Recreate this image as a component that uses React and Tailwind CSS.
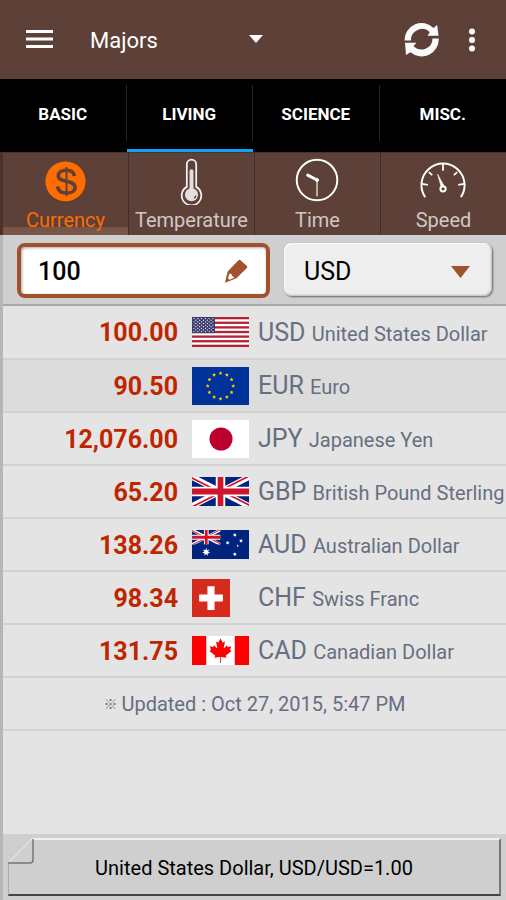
import { useState } from 'react';

const categories = ['BASIC', 'LIVING', 'SCIENCE', 'MISC.'];

const rates = [
    {code: 'USD', name: 'United States Dollar', value: '100.00', Flag: FlagUS},
    {code: 'EUR', name: 'Euro', value: '90.50', Flag: FlagEU},
    {code: 'JPY', name: 'Japanese Yen', value: '12,076.00', Flag: FlagJP},
    {code: 'GBP', name: 'British Pound Sterling', value: '65.20', Flag: FlagGB},
    {code: 'AUD', name: 'Australian Dollar', value: '138.26', Flag: FlagAU},
    {code: 'CHF', name: 'Swiss Franc', value: '98.34', Flag: FlagCH},
    {code: 'CAD', name: 'Canadian Dollar', value: '131.75', Flag: FlagCA},
];

const tools = [
    {label: 'Currency', Icon: CurrencyIcon},
    {label: 'Temperature', Icon: ThermometerIcon},
    {label: 'Time', Icon: ClockIcon},
    {label: 'Speed', Icon: GaugeIcon},
];

/* flags */

function FlagUS() {
    return (
        <svg viewBox="0 0 57 30" className="w-[57px] h-[30px]">
            <rect width="57" height="30" fill="#fff" />
            {[0, 1, 2, 3, 4, 5, 6].map((i) => (
                <rect key={i} y={i * 4.615} width="57" height="2.308" fill="#b22234" />
            ))}
            <rect width="23" height="16.15" fill="#3c3b6e" />
            {[0, 1, 2, 3, 4, 5, 6, 7, 8].map((row) =>
                Array.from({length: row % 2 ? 5 : 6}, (_, col) => (
                    <circle key={`${row}-${col}`} cx={2 + col * 3.8 + (row % 2 ? 1.9 : 0)} cy={1.6 + row * 1.62} r="0.62" fill="#fff" />
                ))
            )}
        </svg>
    );
}

function starPoints(cx, cy, r, tips, inner) {
    return Array.from({length: tips * 2}, (_, i) => {
        const radius = i % 2 ? r * inner : r;
        const angle = (Math.PI * i) / tips - Math.PI / 2;
        return `${cx + radius * Math.cos(angle)},${cy + radius * Math.sin(angle)}`;
    }).join(' ');
}

function FlagEU() {
    return (
        <svg viewBox="0 0 57 38" className="w-[57px] h-[38px]">
            <rect width="57" height="38" fill="#039" />
            {Array.from({length: 12}, (_, i) => {
                const angle = (Math.PI * i) / 6;
                return <polygon key={i} points={starPoints(28.5 + 12.8 * Math.sin(angle), 19 - 12.8 * Math.cos(angle), 2, 5, 0.5)} fill="#fc0" />;
            })}
        </svg>
    );
}

function FlagJP() {
    return (
        <svg viewBox="0 0 57 38" className="w-[57px] h-[38px]">
            <rect width="57" height="38" fill="#fff" />
            <circle cx="29" cy="19" r="11.5" fill="#bc002d" />
        </svg>
    );
}

function UnionJack() {
    return (
        <>
            <rect width="60" height="30" fill="#00247d" />
            <path d="M0 0L60 30M60 0L0 30" stroke="#fff" strokeWidth="6" />
            <path d="M0 0L30 15H26L0 2ZM60 0L30 15H26L56 0ZM60 30L30 15H34L60 28ZM0 30L30 15H34L4 30Z" fill="#cf142b" />
            <path d="M30 0V30M0 15H60" stroke="#fff" strokeWidth="10" />
            <path d="M30 0V30M0 15H60" stroke="#cf142b" strokeWidth="6" />
        </>
    );
}

function FlagGB() {
    return (
        <svg viewBox="0 0 60 30" preserveAspectRatio="none" className="w-[57px] h-[29px]">
            <UnionJack />
        </svg>
    );
}

function FlagAU() {
    return (
        <svg viewBox="0 0 57 29" className="w-[57px] h-[29px]">
            <rect width="57" height="29" fill="#00247d" />
            <svg viewBox="0 0 60 30" width="28.5" height="14.5" preserveAspectRatio="none">
                <UnionJack />
            </svg>
            <polygon points={starPoints(14.2, 22, 4.2, 7, 0.45)} fill="#fff" />
            <polygon points={starPoints(42.8, 5, 2, 7, 0.5)} fill="#fff" />
            <polygon points={starPoints(35.6, 12.8, 2, 7, 0.5)} fill="#fff" />
            <polygon points={starPoints(49, 10.8, 2, 7, 0.5)} fill="#fff" />
            <polygon points={starPoints(42.8, 24.2, 2, 7, 0.5)} fill="#fff" />
            <polygon points={starPoints(45.7, 15.8, 1.2, 5, 0.5)} fill="#fff" />
        </svg>
    );
}

function FlagCH() {
    return (
        <svg viewBox="0 0 32 32" className="w-[38px] h-[38px]">
            <rect width="32" height="32" fill="#d52b1e" />
            <path d="M13 6h6v7h7v6h-7v7h-6v-7H6v-6h7z" fill="#fff" />
        </svg>
    );
}

function FlagCA() {
    return (
        <svg viewBox="0 0 9600 4800" className="w-[57px] h-[29px]" preserveAspectRatio="none">
            <rect width="9600" height="4800" fill="#f00" />
            <rect x="2400" width="4800" height="4800" fill="#fff" />
            <path d="M4890 4430l-45-863a95 95 0 0 1 111-98l859 151-116-320a65 65 0 0 1 20-73l941-762-212-99a65 65 0 0 1-34-79l186-572-542 115a65 65 0 0 1-73-38l-105-247-423 454a65 65 0 0 1-111-57l204-1052-327 189a65 65 0 0 1-91-27l-332-652-332 652a65 65 0 0 1-91 27l-327-189 204 1052a65 65 0 0 1-111 57l-423-454-105 247a65 65 0 0 1-73 38l-542-115 186 572a65 65 0 0 1-34 79l-212 99 941 762a65 65 0 0 1 20 73l-116 320 859-151a95 95 0 0 1 111 98l-45 863z" fill="#f00" />
        </svg>
    );
}

/* icons */

function CurrencyIcon() {
    return (
        <svg viewBox="0 0 48 48" className="w-12 h-12" fill="none">
            <circle cx="23.500" cy="25.500" r="20" fill="#3c3431" />
            <circle cx="23.500" cy="24" r="20.500" fill="#ff6d00" />
            <path d="M32.500 18.500C32 14 28.500 12.500 24.200 12.500C19.500 12.500 16.200 14.700 16.200 18C16.200 26 33.200 21.500 33.200 30C33.200 33.600 29.500 35.800 24.700 35.800C19.500 35.800 15.800 33.500 15.500 29" stroke="#5d4037" strokeWidth="3.600" />
            <path d="M24.500 9.200V39" stroke="#5d4037" strokeWidth="2" />
        </svg>
    );
}

function ThermometerIcon() {
    return (
        <svg viewBox="0 0 48 48" className="w-12 h-12" fill="none">
            <path d="M18.700 29.500V6.500a4.800 4.800 0 0 1 9.600 0V29.500a10 10 0 1 1-9.600 0z" stroke="#f5f3f2" strokeWidth="1.800" />
            <circle cx="23.500" cy="37.500" r="6.700" fill="#e4dfdd" />
            <path d="M23.500 13.500V34" stroke="#e4dfdd" strokeWidth="4" strokeLinecap="round" />
            <path d="M28 38.500q-.5 2-2 2.500" stroke="#5d4037" strokeWidth="1.400" />
        </svg>
    );
}

function ClockIcon() {
    return (
        <svg viewBox="0 0 48 48" className="w-12 h-12" fill="none" stroke="#fff">
            <circle cx="23" cy="22.500" r="20.700" strokeWidth="2" />
            <path d="M13.500 17.500L23 22.500" strokeWidth="3" strokeLinecap="round" />
            <path d="M23 22.500V39" strokeWidth="1.500" stroke="#ddd6d3" />
            <circle cx="23" cy="22.500" r="1.500" fill="#fff" />
        </svg>
    );
}

function GaugeIcon() {
    return (
        <svg viewBox="0 0 48 48" className="w-12 h-12" fill="none" stroke="#fff" strokeWidth="2">
            <path d="M4.800 40A22 22 0 1 1 41.200 40" />
            <path d="M23 6V13M8.500 14.500L12 17.500M37.500 14.500L34 17.500M1.500 26.500L7.500 27.500M44.500 26.500L38.500 27.500" strokeWidth="1.800" />
            <circle cx="23" cy="31.500" r="2.700" />
            <path d="M17.500 16.500L21.300 30L24.300 29z" fill="#fff" strokeWidth="0.600" />
        </svg>
    );
}

function RefreshIcon() {
    return (
        <svg viewBox="0 0 36 36" className="w-9 h-9" fill="#fafafa">
            <path d="M.5 18.500A17 17 0 0 1 29.500 6L33.200 3L34.500 13.800L23.500 13.800L25.800 10.200A11 11 0 0 0 7 18.500Z" />
            <path d="M34.700 16.500A17 17 0 0 1 6.500 30.200L2 33L1 20.800H12.500L9.500 24A11 11 0 0 0 28.500 16.500Z" />
        </svg>
    );
}

function PencilIcon() {
    return (
        <svg viewBox="0 0 24 24" className="w-6 h-6" fill="#a0522d">
            <path d="M14.500 1.200Q15.500 .3 16.500 1.200L23 7Q23.800 7.800 23 8.700L12.500 19.200L1 23.700L3.600 12.500Z" />
            <path d="M5.500 14.500L7.500 15L8 17L10.500 18.500L5.500 20.800L4 19.300Z" fill="#fff" />
        </svg>
    );
}

function App() {
    const [amount, setAmount] = useState('100');
    const [currency, setCurrency] = useState('USD');

    return (
        <div className="min-h-screen w-full flex flex-col bg-[#e4e4e4] font-[Roboto,'Noto_Sans_CJK_JP',sans-serif] text-black">

            {/* app bar */}
            <header className="h-[79px] bg-[#5d4037] text-white flex items-center pl-[26px] pr-[30px]">
                <button type="button" aria-label="Menu">
                    <svg viewBox="0 0 27 20" className="w-[27px] h-5" fill="#fff">
                        <path d="M0 0h27v3H0zM0 7.500h27v3H0zM0 15h27v3H0z" />
                    </svg>
                </button>
                <button type="button" className="ml-[37px] w-[173px] pt-0.5 flex items-center justify-between text-[22px] leading-8">
                    Majors
                    <svg viewBox="0 0 14 8" className="w-[14px] h-2 mb-1" fill="#fff"><path d="M0 0h14L7 8z" /></svg>
                </button>
                <button type="button" aria-label="Refresh" className="ml-auto">
                    <RefreshIcon />
                </button>
                <button type="button" aria-label="More options" className="ml-6 pl-1">
                    <svg viewBox="0 0 8 26" className="w-2 h-[26px]" fill="#fff">
                        <circle cx="4" cy="4.500" r="3" />
                        <circle cx="4" cy="13" r="3" />
                        <circle cx="4" cy="21.500" r="3" />
                    </svg>
                </button>
            </header>

            {/* categories */}
            <nav className="h-[73px] bg-black text-white flex">
                {categories.map((name, i) => (
                    <button key={name} type="button"
                            className={`flex-1 flex items-center pt-[6px] border-b-[3px] ${name === 'LIVING' ? 'border-[#0ba5f5]' : 'border-black'}`}>
                        <span className={`w-full h-14 mb-2 flex items-center justify-center pt-1 text-[17px] font-bold ${i < 3 ? 'border-r border-[#262626]' : ''}`}>
                            {name}
                        </span>
                    </button>
                ))}
            </nav>

            {/* tools */}
            <nav className="h-[83px] flex bg-[#5d4037] border-l-[3px] border-[#4a322c]">
                {tools.map(({label, Icon}, i) => (
                    <button key={label} type="button"
                            className={`flex-1 flex flex-col items-center pt-[5px] border-t border-t-[#4b332c] text-xl leading-[30px] ${i < 3 ? 'border-r border-r-[#422b25]' : ''} ${i === 0 ? 'text-[#ff6d00] bg-linear-to-t from-[#795548] from-[8px] to-[#5d4037] to-[8px]' : 'text-[#d0c8c5]'}`}>
                        <Icon />
                        {label}
                    </button>
                ))}
            </nav>

            <main className="flex-1 flex flex-col border-l-[3px] border-[#b6b6b6]">
                {/* amount and currency */}
                <form className="h-[71px] grid grid-cols-[253fr_208fr] gap-[14px] pt-2 px-[14px] bg-[#cfcfcf] border-b-2 border-[#a9a9a9]" onSubmit={(e) => e.preventDefault()}>
                    <div className="min-w-0 h-[55px] flex items-center pl-[17px] pr-[18px] bg-white border-4 border-[#a0522d] rounded-lg shadow-[inset_1px_1px_3px_#aaa]">
                        <input type="text" aria-label="Amount" value={amount} onChange={(e) => setAmount(e.target.value)}
                               className="flex-1 min-w-0 h-10 pt-0.5 text-[25px] leading-8 font-medium bg-transparent outline-none" />
                        <PencilIcon />
                    </div>
                    <div className="min-w-0 relative h-[53px]">
                        <select aria-label="Currency" value={currency} onChange={(e) => setCurrency(e.target.value)}
                                className="w-full h-full pl-5 pt-1 appearance-none bg-[#eee] rounded-lg text-[25px] leading-8 shadow-[1px_1px_2px_#666,inset_-1px_-1px_2px_#bbb,inset_1px_1px_1px_#fff]">
                            {rates.map((rate) => <option key={rate.code}>{rate.code}</option>)}
                        </select>
                        <svg viewBox="0 0 19 12" className="absolute right-[22px] top-[23px] w-[19px] h-3 pointer-events-none" fill="#a0522d">
                            <path d="M0 0h19L9.500 12z" />
                        </svg>
                    </div>
                </form>

                {/* rates */}
                <table className="w-full table-fixed">
                    <tbody>
                        {rates.map(({code, name, value, Flag}) => (
                            <tr key={code} className={`h-[53px] border-b-2 border-[#d2d2d2] ${code === 'EUR' ? 'bg-[#dcdcdc]' : ''}`}>
                                <td className="w-[175px] p-0 pt-0.5 text-right text-[25px] leading-8 font-bold text-[#bf2600]">{value}</td>
                                <td className="w-20 p-0 pl-[14px]"><Flag /></td>
                                <th scope="row" className="p-0 pt-0.5 text-left font-normal text-[25px] leading-8 text-[#666f80] whitespace-nowrap">
                                    {code} <span className="text-[20px]">{name}</span>
                                </th>
                            </tr>
                        ))}
                    </tbody>
                </table>
                <p className="h-[53px] flex items-center justify-center gap-1 border-b-2 border-[#d2d2d2] text-xl text-[#666f80]">
                    <span className="text-sm font-bold">※</span>
                    Updated : Oct 27, 2015, 5:47 PM
                </p>
            </main>

            {/* selected rate */}
            <footer className="h-[66px] py-1 px-[5px] bg-[#cfcfcf] border-l-[3px] border-[#b6b6b6]">
                <button type="button" className="relative w-full h-[58px] pt-0.5 flex items-center justify-center text-xl border-t-2 border-t-[#f0f0f0] border-b-2 border-b-[#444] border-r-2 border-r-[#777] border-l border-l-[#aaa]">
                    <svg viewBox="0 0 26 26" className="absolute -left-px -top-[2px] w-[26px] h-[26px]" fill="none">
                        <path d="M0 0H24L0 24Z" fill="#cfcfcf" />
                        <path d="M0 25L25 0" stroke="#eee" />
                        <path d="M25 1V22Q25 25 22 25H0" stroke="#777" strokeWidth="1.500" />
                    </svg>
                    United States Dollar, USD/USD=1.00
                </button>
            </footer>
        </div>
    );
}

export default App;
